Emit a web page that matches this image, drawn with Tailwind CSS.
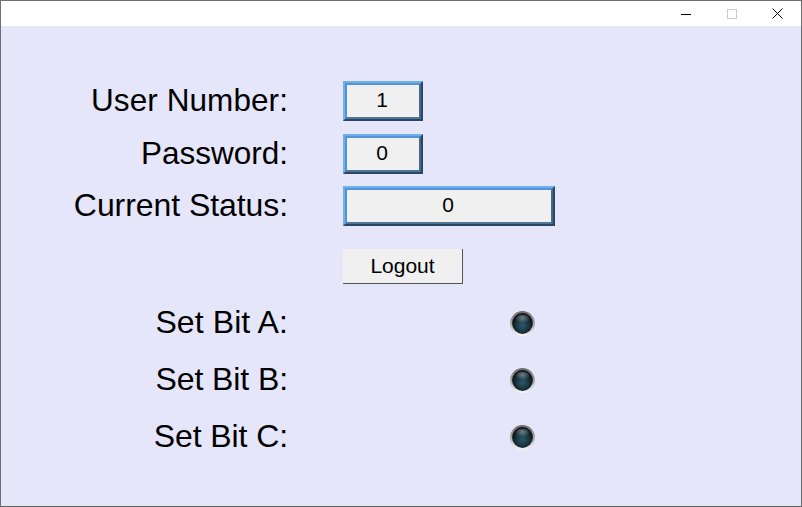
<!DOCTYPE html>
<html lang="en">
<head>
    <meta charset="UTF-8">
    <title>Login</title>
    <script src="https://cdn.jsdelivr.net/npm/@tailwindcss/browser@4"></script>
</head>
<body class="overflow-hidden">
    <div class="w-[802px] h-[507px] flex flex-col border border-[#6f6f6f] border-b-[#5f5f5f] font-['Liberation_Sans',Arial,sans-serif] text-black">
        <!-- title bar -->
        <div class="h-[25px] bg-white flex justify-end shrink-0">
            <div class="w-[46px] flex items-center justify-center">
                <svg width="10" height="10" viewBox="0 0 10 10"><path d="M0 5.5H10" stroke="#000" stroke-width="1"/></svg>
            </div>
            <div class="w-[46px] flex items-center justify-center">
                <svg width="10" height="10" viewBox="0 0 10 10"><rect x="0.5" y="0.5" width="9" height="9" fill="none" stroke="#cccccc"/></svg>
            </div>
            <div class="w-[46px] flex items-center justify-center -translate-x-px">
                <svg width="11" height="11" viewBox="0 0 11 11"><path d="M0.5 0.5L10.5 10.5M10.5 0.5L0.5 10.5" stroke="#000" stroke-width="1"/></svg>
            </div>
        </div>
        <!-- form -->
        <div class="flex-1 bg-[#e6e6fa] pt-[55px] pl-[342px]">
            <svg width="0" height="0" class="absolute">
                <defs>
                    <linearGradient id="ledRing" x1="0" y1="0" x2="0" y2="1">
                        <stop offset="0" stop-color="#6a6a6a"/>
                        <stop offset="0.5" stop-color="#a8a8a8"/>
                        <stop offset="1" stop-color="#f8f8f8"/>
                    </linearGradient>
                    <radialGradient id="ledFace" cx="0.5" cy="0.6" r="0.55">
                        <stop offset="0" stop-color="#2a5a6c"/>
                        <stop offset="0.55" stop-color="#1a3540"/>
                        <stop offset="1" stop-color="#0a0e10"/>
                    </radialGradient>
                    <radialGradient id="ledGlare" cx="0.5" cy="0.35" r="0.6">
                        <stop offset="0" stop-color="#a9bcc4" stop-opacity="0.6"/>
                        <stop offset="1" stop-color="#a9bcc4" stop-opacity="0"/>
                    </radialGradient>
                </defs>
            </svg>
            <div class="grid grid-cols-[80px] gap-y-[13px]">
                <div class="relative h-[40px] w-[80px] flex">
                    <span class="absolute right-[135px] top-0 h-full w-[300px] text-right text-[31.5px] tracking-[0.08px] leading-[38px] whitespace-nowrap">User Number:</span>
                    <div class="w-full border-2 border-t-[#6db0ee] border-l-[#6db0ee] border-r-[#2c4763] border-b-[#2c4763]">
                        <div class="h-full pb-[2px] pr-[2px] border-2 border-t-[#5494d0] border-l-[#5494d0] border-r-[#47698a] border-b-[#4f7699] bg-[#f0f0f0] flex items-center justify-center text-[21px]">1</div>
                    </div>
                </div>
                <div class="relative h-[40px] w-[80px] flex">
                    <span class="absolute right-[135px] top-0 h-full w-[300px] text-right text-[31.5px] leading-[38px] whitespace-nowrap">Password:</span>
                    <div class="w-full border-2 border-t-[#6db0ee] border-l-[#6db0ee] border-r-[#2c4763] border-b-[#2c4763]">
                        <div class="h-full pb-[2px] pr-[2px] border-2 border-t-[#5494d0] border-l-[#5494d0] border-r-[#47698a] border-b-[#4f7699] bg-[#f0f0f0] flex items-center justify-center text-[21px]">0</div>
                    </div>
                </div>
            </div>
            <div class="relative h-[40px] w-[212px] mt-[12px]">
                <span class="absolute right-[267px] top-0 h-full w-[300px] text-right text-[32px] tracking-[-0.07px] leading-[38px] whitespace-nowrap">Current Status:</span>
                <div class="h-full border-2 border-t-[#6db0ee] border-l-[#6db0ee] border-r-[#2c4763] border-b-[#2c4763]">
                    <div class="h-full pb-[2px] pr-[2px] border-2 border-t-[#5494d0] border-l-[#5494d0] border-r-[#47698a] border-b-[#4f7699] bg-[#f0f0f0] flex items-center justify-center text-[21px]">0</div>
                </div>
            </div>
            <button class="mt-[23px] w-[120px] h-[35px] bg-[#f0f0f0] border-r border-b border-[#555555] text-[21px] flex items-center justify-center">Logout</button>
            <div class="mt-[27px] flex flex-col gap-y-[32px]">
                <div class="relative h-[25px] w-[192px] flex justify-end">
                    <span class="absolute right-[247px] -top-[2px] w-[300px] text-right text-[32px] tracking-[0.1px] leading-[26px] whitespace-nowrap">Set Bit A:</span>
                    <svg width="25" height="25" viewBox="0 0 25 25"><circle cx="12.5" cy="12.5" r="12.5" fill="url(#ledRing)"/><circle cx="12.5" cy="12.5" r="10.4" fill="url(#ledFace)"/><ellipse cx="12.5" cy="8" rx="7" ry="4.5" fill="url(#ledGlare)"/></svg>
                </div>
                <div class="relative h-[25px] w-[192px] flex justify-end">
                    <span class="absolute right-[247px] -top-[2px] w-[300px] text-right text-[32px] tracking-[-0.1px] leading-[26px] whitespace-nowrap">Set Bit B:</span>
                    <svg width="25" height="25" viewBox="0 0 25 25"><circle cx="12.5" cy="12.5" r="12.5" fill="url(#ledRing)"/><circle cx="12.5" cy="12.5" r="10.4" fill="url(#ledFace)"/><ellipse cx="12.5" cy="8" rx="7" ry="4.5" fill="url(#ledGlare)"/></svg>
                </div>
                <div class="relative h-[25px] w-[192px] flex justify-end">
                    <span class="absolute right-[247px] -top-[2px] w-[300px] text-right text-[32px] tracking-[-0.1px] leading-[26px] whitespace-nowrap">Set Bit C:</span>
                    <svg width="25" height="25" viewBox="0 0 25 25"><circle cx="12.5" cy="12.5" r="12.5" fill="url(#ledRing)"/><circle cx="12.5" cy="12.5" r="10.4" fill="url(#ledFace)"/><ellipse cx="12.5" cy="8" rx="7" ry="4.5" fill="url(#ledGlare)"/></svg>
                </div>
            </div>
        </div>
    </div>
</body>
</html>
